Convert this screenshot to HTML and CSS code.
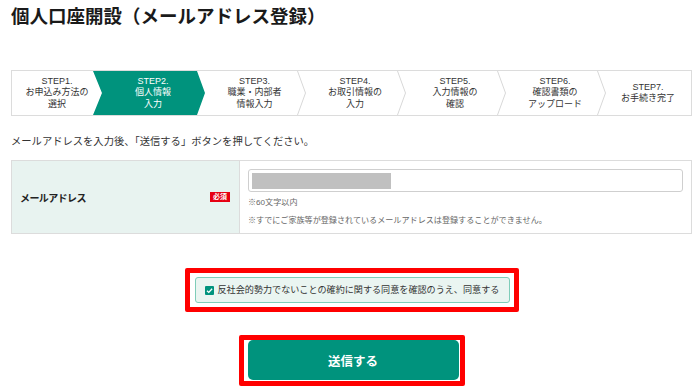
FILE: index.html
```html
<!DOCTYPE html>
<html lang="ja">
<head>
<meta charset="utf-8">
<title>個人口座開設（メールアドレス登録）</title>
<link rel="stylesheet" href="styles.css">
</head>
<body>
<div class="page">
  <h1 class="title">個人口座開設（メールアドレス登録）</h1>

  <ol class="steps">
    <li class="step"><span>STEP1.</span><span>お申込み方法の</span><span>選択</span></li>
    <li class="step current"><span>STEP2.</span><span>個人情報</span><span>入力</span></li>
    <li class="step"><span>STEP3.</span><span>職業・内部者</span><span>情報入力</span></li>
    <li class="step"><span>STEP4.</span><span>お取引情報の</span><span>入力</span></li>
    <li class="step"><span>STEP5.</span><span>入力情報の</span><span>確認</span></li>
    <li class="step"><span>STEP6.</span><span>確認書類の</span><span>アップロード</span></li>
    <li class="step last"><span>STEP7.</span><span>お手続き完了</span></li>
  </ol>

  <p class="lead">メールアドレスを入力後、「送信する」ボタンを押してください。</p>

  <div class="form-table">
    <div class="label-cell">
      <span class="label">メールアドレス</span>
      <span class="req">必須</span>
    </div>
    <div class="input-cell">
      <div class="input"><span class="redact"></span></div>
      <p class="note">※60文字以内</p>
      <p class="note">※すでにご家族等が登録されているメールアドレスは登録することができません。</p>
    </div>
  </div>

  <div class="agree-row">
    <div class="highlight agree-hl">
      <label class="agree">
        <span class="check"><svg viewBox="0 0 10 10" width="9" height="9"><path d="M2.2 5.2 L4.2 7.1 L7.9 3.0" fill="none" stroke="#fff" stroke-width="1.5"/></svg></span>
        <span class="agree-text">反社会的勢力でないことの確約に関する同意を確認のうえ、同意する</span>
      </label>
    </div>
  </div>

  <div class="submit-row">
    <div class="highlight submit-hl">
      <button class="submit" type="button">送信する</button>
    </div>
  </div>
</div>
</body>
</html>
```

FILE: styles.css
```css
* { box-sizing: border-box; }

html, body {
  margin: 0;
  padding: 0;
  background: #fff;
}

body {
  font-family: "Liberation Sans", "Noto Sans CJK JP", sans-serif;
  color: #333;
  overflow: hidden;
}

.page {
  width: 681px;
  margin-left: 11px;
}

.title {
  margin: 0;
  padding-top: 6px;
  font-size: 18.5px;
  line-height: 22px;
  font-weight: bold;
  color: #1a1a1a;
}

/* ---- steps ---- */
.steps {
  list-style: none;
  margin: 42px 0 0;
  padding: 0;
  height: 46px;
  border: 1px solid #dcdcdc;
  display: grid;
  grid-template-columns: 90px 102px 101px 100px 100px 100px 1fr;
}

.step {
  position: relative;
  display: flex;
  flex-direction: column;
  justify-content: center;
  align-items: center;
  font-size: 9px;
  line-height: 11.5px;
  color: #333;
  text-align: center;
  white-space: nowrap;
}

.step::after {
  content: "";
  position: absolute;
  top: 0;
  bottom: 0;
  right: -1px;
  width: 9px;
  background: #d8d8d8;
  clip-path: polygon(0 0, 1px 0, 9px 50%, 1px 100%, 0 100%, 8px 50%);
  z-index: 1;
}

.step.last::after { display: none; }

.step span { position: relative; z-index: 3; }

.step.current { color: #fff; }

.step.current::before {
  content: "";
  position: absolute;
  top: 0;
  bottom: 0;
  left: -9px;
  right: -1px;
  background: #00937d;
  clip-path: polygon(0 0, calc(100% - 8px) 0, 100% 50%, calc(100% - 8px) 100%, 0 100%, 9px 50%);
  z-index: 2;
}

.step.current::after { display: none; }

/* ---- lead ---- */
.lead {
  margin: 19px 0 0;
  font-size: 10.3px;
  line-height: 14px;
  color: #333;
}

/* ---- form table ---- */
.form-table {
  margin-top: 11px;
  border: 1px solid #dcdcdc;
  display: grid;
  grid-template-columns: 228px 1fr;
}

.label-cell {
  background: #e8f3f0;
  border-right: 1px solid #dcdcdc;
  display: flex;
  align-items: center;
  justify-content: space-between;
  padding: 0 9px 0 8px;
}

.label {
  font-size: 10px;
  letter-spacing: -0.6px;
  font-weight: bold;
  color: #222;
}

.req {
  background: #e60012;
  color: #fff;
  font-size: 7px;
  line-height: 10px;
  padding: 0 3px;
  font-weight: bold;
}

.input-cell {
  padding: 8px 8px 6px 8px;
}

.input {
  height: 23px;
  border: 1px solid #cfcfcf;
  border-radius: 3px;
  padding: 3px 3px 2px 3px;
  background: #fff;
}

.redact {
  display: block;
  width: 139px;
  height: 16px;
  background: #c0c0c0;
}

.note {
  margin: 5px 0 0;
  font-size: 8.1px;
  line-height: 12px;
  color: #666;
}

.note + .note { margin-top: 6px; }

/* ---- highlights ---- */
.highlight {
  border: 5px solid #ff0000;
  border-radius: 2px;
  background: #fff;
}

.agree-row {
  display: flex;
  justify-content: center;
  margin-top: 34px;
}

.agree-hl {
  width: 334px;
  padding: 4px 4px 4px 5px;
}

.agree {
  display: flex;
  align-items: center;
  height: 26px;
  border: 1px solid #7fcdb9;
  border-radius: 3px;
  background: #eaf5f1;
  padding: 0 8px 0 9px;
}

.check {
  width: 9px;
  height: 9px;
  background: #00937d;
  border-radius: 1px;
  display: flex;
  align-items: center;
  justify-content: center;
  flex: none;
}

.check svg { display: block; }

.agree-text {
  margin-left: 4px;
  font-size: 9.1px;
  line-height: 12px;
  color: #333;
  white-space: nowrap;
}

.submit-row {
  display: flex;
  justify-content: center;
  margin-top: 23px;
}

.submit-hl {
  width: 226px;
  padding: 0 1px 1px 4px;
}

.submit {
  display: block;
  width: 211px;
  height: 40px;
  border: none;
  border-radius: 5px;
  background: #00937d;
  color: #fff;
  font-family: "Liberation Sans", "Noto Sans CJK JP", sans-serif;
  font-size: 12.5px;
  font-weight: bold;
  cursor: pointer;
}
```
